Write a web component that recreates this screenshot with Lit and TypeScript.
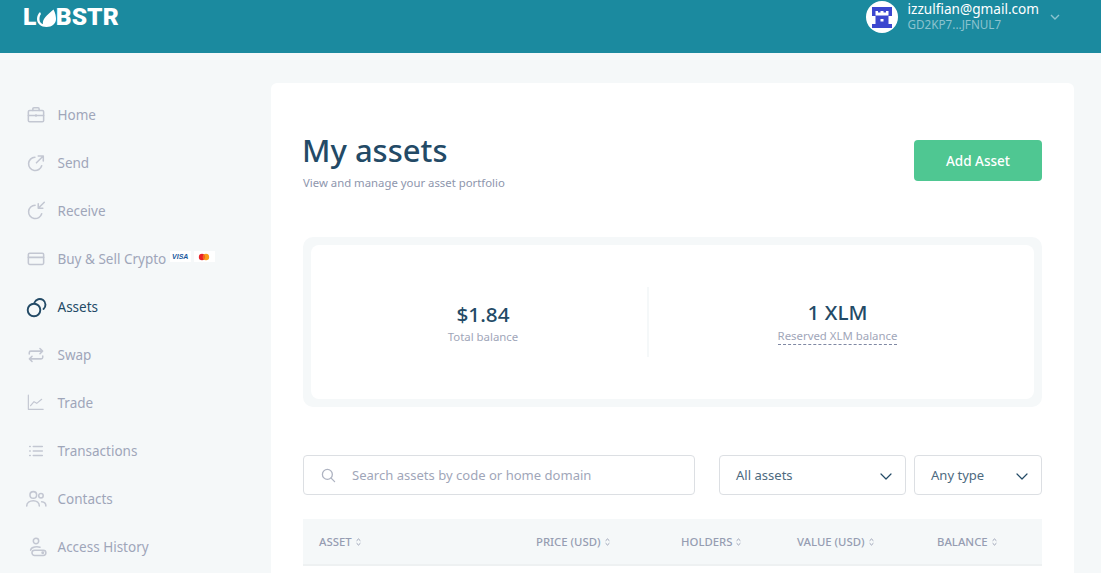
import { LitElement, html, css, svg } from "lit";
import { customElement } from "lit/decorators.js";

const I = (c: any) => html`<svg class="ic" viewBox="0 0 20 20" fill="none" stroke="currentColor" stroke-width="1.7" stroke-linecap="round" stroke-linejoin="round">${c}</svg>`;

const nav = [
  { t: "Home", i: svg`<rect x="1.5" y="5" width="17" height="12.5" rx="1.5"/><path d="M6.5 5V3.200c0-.7.5-1.200 1.200-1.200h4.600c.7 0 1.200.5 1.200 1.200V5M1.500 10.500h17M10 9.600v1.800"/>` },
  { t: "Send", i: svg`<path d="M8.800 3.600A7.400 7.400 0 1 0 16.300 13M10.500 9.800 18.100 2.200M12.500 2.200H18.100V7.800"/>` },
  { t: "Receive", i: svg`<path d="M9 3.600A7.400 7.400 0 1 0 16.300 13M19.200.3 12.500 7M12.500 1.900V7H17.600"/>` },
  { t: "Buy & Sell Crypto", i: svg`<rect x="1.5" y="3.500" width="17" height="12.500" rx="1.500"/><path d="M1.500 8.200h17"/>`, cards: true },
  { t: "Assets", active: true, i: svg`<circle cx="7" cy="13" r="6.300" stroke-width="1.900"/><path d="M7.500 5.500A5.700 5.700 0 1 1 16.500 12" stroke-width="1.900"/>` },
  { t: "Swap", i: svg`<path d="M2.500 9V7.500c0-1 .8-1.800 1.800-1.800h13M14.400 2.800l2.900 2.900-2.900 2.900M17.500 11v1.500c0 1-.8 1.800-1.800 1.800h-13M5.600 17.200l-2.900-2.900 2.900-2.900"/>` },
  { t: "Trade", i: svg`<path d="M1.500 1.300V17H18" stroke-width="1.300"/><path d="M4 13l3.800-4.500 3 1.900 5.500-4.500" stroke-width="1.300"/>` },
  { t: "Transactions", i: svg`<path d="M7 5h10M7 10h10M7 15h10M3 5h.6M3 10h.6M3 15h.6"/>` },
  { t: "Contacts", i: svg`<circle cx="7" cy="5.500" r="3.700"/><circle cx="15.500" cy="6.300" r="2.500"/><path d="M-.3 17.800C-.3 14 3 11.900 7 11.900c3.700 0 6.700 2.100 6.700 5.900M16.300 13c2.600.2 4.700 1.900 4.700 4.800"/>` },
  { t: "Access History", i: svg`<circle cx="10" cy="3.300" r="3"/><path d="M14.400 10.300C12 9.500 4.500 9.300 4 13.500"/><rect x="5.500" y="13.500" width="15.500" height="6" rx="3"/><circle cx="17.500" cy="16.500" r=".8"/>` },
];

@customElement("app-root")
export class AppRoot extends LitElement {
  static styles = css`
    :host {
      display: block;
      height: 100vh;
      overflow: hidden;
      background: #f5f8f9;
      font-family: "Noto Sans", sans-serif;
      color: #9fa6b9;
    }
    header {
      height: 53px;
      background: #1b8a9f;
      display: flex;
      justify-content: space-between;
      align-items: flex-start;
      color: #fff;
    }
    .logo {
      display: flex;
      align-items: flex-start;
      margin: 5px 0 0 23px;
      font: 900 24.6px/24px Roboto, sans-serif;
    }
    .logo svg { width: 19px; height: 18px; margin: 4px 0 0 .5px; }
    .acct { display: flex; align-items: flex-start; margin-right: 41px; }
    .avatar { width: 32px; height: 32px; border-radius: 50%; background: #fff; display: flex; align-items: center; justify-content: center; margin-top: 1px; }
    .avatar svg { width: 20px; height: 21px; }
    .who { margin-left: 10px; padding-top: 1px; }
    .mail { font-size: 13.6px; line-height: 16px; }
    .addr { font-size: 11.7px; line-height: 14px; color: #8cc3cf; }
    .caret { width: 10px; height: 6px; margin: 14px 0 0 11px; color: #8cc3cf; }
    main { display: flex; align-items: flex-start; }
    nav { width: 271px; flex: none; padding-top: 38px; }
    .item { height: 48px; display: flex; align-items: center; padding-left: 27px; font-size: 13.5px; }
    .item.on { color: #234a66; }
    .ic { width: 18px; height: 18px; color: #c3c7d2; flex: none; margin-right: 12.5px; overflow: visible; }
    .on .ic { color: #234a66; width: 20px; height: 20px; margin: 0 10.5px 0 0; }
    .badge { width: 21px; height: 11px; background: #fff; margin-left: 3.5px; display: flex; align-items: center; justify-content: center; margin-top: -5px; }
    .badge + .badge { margin-left: 3px; }
    .visa { font: italic 900 7px "Liberation Sans", sans-serif; color: #1a5a9e; }
    .badge svg { width: 12px; height: 8px; }
    .card {
      width: 803px;
      flex: none;
      margin-top: 30px;
      background: #fff;
      border-radius: 6px;
      padding: 32px;
      box-sizing: border-box;
      height: 600px;
    }
    .top { display: flex; justify-content: space-between; align-items: flex-start; padding-top: 17px; }
    h1 { margin: 0; font-size: 31px; line-height: 36px; font-weight: 500; color: #234a66; margin-left: -1px; }
    .sub { font-size: 11.35px; line-height: 14px; margin-top: 8px; color: #8e96ad; }
    .add {
      width: 128px; height: 41px; margin-top: 8px; background: #4fc792; color: #fff; border-radius: 4px;
      display: flex; align-items: center; justify-content: center; font-size: 13.5px; font-weight: 500;
    }
    .bal { margin-top: 47px; background: #f5f8f9; border-radius: 10px; padding: 8px; }
    .inner { background: #fff; border-radius: 8px; height: 154px; display: flex; align-items: center; padding: 0 8px; }
    .cell { width: 328px; display: flex; flex-direction: column; align-items: center; height: 70px; padding-top: 14px; box-sizing: border-box; flex: none; }
    .cell + .cell { border-left: 2px solid #f5f8f9; flex: 1; padding-top: 12px; }
    .val { font-size: 20.7px; line-height: 26px; font-weight: 500; color: #234a66; }
    .lbl { font-size: 11.4px; line-height: 15px; color: #9fa6b9; margin-top: 2px; }
    .dash { border-bottom: 1px dashed #7f88a3; line-height: 14px; padding-bottom: 1px; margin-top: 4px; }
    .filters { display: flex; margin-top: 48px; }
    .box { height: 40px; border: 1px solid #dcdfe3; border-radius: 4px; box-sizing: border-box; display: flex; align-items: center; font-size: 13.05px; background: #fff; }
    .search { width: 392px; padding-left: 17px; margin-right: 24px; }
    .search svg { width: 15px; height: 15px; color: #aeb3c1; margin-right: 16px; }
    .sel { justify-content: space-between; color: #4d6a80; padding: 0 13px 0 16px; }
    .sel svg { width: 12px; height: 7px; color: #234a66; margin-top: 2px; }
    .s1 { width: 187px; margin-right: 8px; }
    .s2 { width: 128px; }
    .thead {
      margin-top: 24px; height: 47px; background: #f5f8f9; border-bottom: 2px solid #eef1f2; box-sizing: border-box;
      display: grid; grid-template-columns: 217px 145px 116px 140px 1fr; align-items: center; padding-left: 16px;
      font-size: 11.35px; font-weight: 500; color: #969db2;
    }
    .thead svg { width: 5px; height: 8px; margin-left: 4px; color: #8e96ad; }
  `;

  render() {
    const sort = html`<svg viewBox="0 0 5 8" fill="none" stroke="currentColor" stroke-width=".9"><path d="M.6 2.800 2.500 1l1.900 1.800M.6 5.200 2.500 7l1.900-1.800"/></svg>`;
    const chev = html`<svg viewBox="0 0 12 7" fill="none" stroke="currentColor" stroke-width="1.200" stroke-linecap="round" stroke-linejoin="round"><path d="M1 1l5 5 5-5"/></svg>`;
    return html`
      <header>
        <div class="logo">L<svg viewBox="0 0 19 18"><path fill="#fff" d="M16.500.5C18.500 4 19 8 19 10c0 4.500-4 8-9.500 8C4 18 0 14.500 0 10c0-3 1-5 3-7l1 2C2.500 7 2.500 9 2.500 10.500c0 2.500 1.500 4 3.500 4.500C5 10 10 6 16.500.5Z"/></svg>BSTR</div>
        <div class="acct">
          <div class="avatar"><svg viewBox="0 0 20 21"><path fill="#3c47cf" d="M0 0h20v9h-3.500v8H20v4H0v-4h3.500V9H0z"/><path fill="#fff" d="M3.500 4H6v1.500h2.500V4h3v1.500H14V4h2.500v4.500h-13zM8.500 12h3v2.500h-3z"/></svg></div>
          <div class="who"><div class="mail">izzulfian@gmail.com</div><div class="addr">GD2KP7...JFNUL7</div></div>
          <svg class="caret" viewBox="0 0 10 6" fill="none" stroke="currentColor" stroke-width="1.400"><path d="M1 1l4 4 4-4"/></svg>
        </div>
      </header>
      <main>
        <nav>
          ${nav.map((n) => html`<div class="item ${n.active ? "on" : ""}">${I(n.i)}<span>${n.t}</span>${n.cards ? html`<span class="badge visa">VISA</span><span class="badge"><svg viewBox="0 0 12 8"><circle cx="4" cy="4" r="3.200" fill="#e8242a"/><circle cx="8" cy="4" r="3.200" fill="#f79e1b"/><path d="M6 1.500a3.200 3.200 0 0 1 0 5 3.200 3.200 0 0 1 0-5Z" fill="#f5641e"/></svg></span>` : ""}</div>`)}
        </nav>
        <section class="card">
          <div class="top">
            <div><h1>My assets</h1><div class="sub">View and manage your asset portfolio</div></div>
            <div class="add">Add Asset</div>
          </div>
          <div class="bal"><div class="inner">
            <div class="cell"><div class="val">$1.84</div><div class="lbl">Total balance</div></div>
            <div class="cell"><div class="val">1 XLM</div><div class="lbl dash">Reserved XLM balance</div></div>
          </div></div>
          <div class="filters">
            <div class="box search"><svg viewBox="0 0 16 16" fill="none" stroke="currentColor" stroke-width="1.400" stroke-linecap="round"><circle cx="6.800" cy="6.800" r="5.300"/><path d="M10.800 10.800 14.500 14.500"/></svg><span>Search assets by code or home domain</span></div>
            <div class="box sel s1"><span>All assets</span>${chev}</div>
            <div class="box sel s2"><span>Any type</span>${chev}</div>
          </div>
          <div class="thead">
            <div>ASSET${sort}</div><div>PRICE (USD)${sort}</div><div>HOLDERS${sort}</div><div>VALUE (USD)${sort}</div><div>BALANCE${sort}</div>
          </div>
        </section>
      </main>
    `;
  }
}
